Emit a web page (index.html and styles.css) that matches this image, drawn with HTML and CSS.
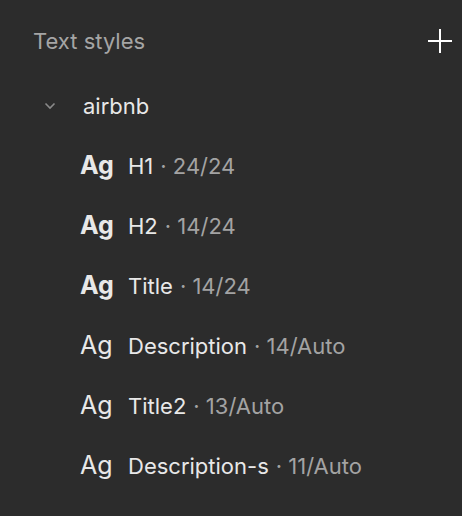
FILE: index.html
```html
<!DOCTYPE html>
<html>
<head>
	<title>Text styles</title>
	<meta charset="utf-8">
	<meta name="viewport" content="width=device-width, initial-scale=1">
	<link rel="stylesheet" href="styles.css">
</head>
<body>
	<div class="panel">
		<div class="header">
			<span class="title">Text styles</span>
			<button class="add" aria-label="Add style">
				<svg width="24" height="24" viewBox="0 0 24 24"><path d="M12 0v24M0 12h24" stroke="#fff" stroke-width="2"/></svg>
			</button>
		</div>
		<div class="group">
			<svg class="chevron" width="12" height="8" viewBox="0 0 12 8"><path d="M1.5 1.5l4.5 4.5 4.5-4.5" fill="none" stroke="#8a8a8a" stroke-width="1.6"/></svg>
			<span class="groupName">airbnb</span>
		</div>
		<ul class="styles">
			<li class="item"><span class="ag bold">Ag</span><span class="name">H1</span><span class="meta">· 24/24</span></li>
			<li class="item"><span class="ag bold">Ag</span><span class="name">H2</span><span class="meta">· 14/24</span></li>
			<li class="item"><span class="ag bold">Ag</span><span class="name">Title</span><span class="meta">· 14/24</span></li>
			<li class="item"><span class="ag">Ag</span><span class="name">Description</span><span class="meta">· 14/Auto</span></li>
			<li class="item"><span class="ag">Ag</span><span class="name">Title2</span><span class="meta">· 13/Auto</span></li>
			<li class="item"><span class="ag">Ag</span><span class="name">Description-s</span><span class="meta">· 11/Auto</span></li>
		</ul>
	</div>
</body>
</html>
```

FILE: styles.css
```css
html, body {
	margin: 0;
	background: #2c2c2c;
}
.panel {
	font-family: Inter, "Noto Sans", sans-serif;
	width: 462px;
	height: 516px;
	box-sizing: border-box;
	padding: 21px 10px 0 33px;
	color: #e8e8e8;
}
.header {
	display: flex;
	align-items: center;
	justify-content: space-between;
	height: 40px;
}
.title {
	font-size: 22px;
	color: #a5a5a5;
}
.add {
	background: none;
	border: 0;
	padding: 0;
	width: 24px;
	height: 24px;
	display: flex;
}
.group {
	display: flex;
	align-items: center;
	height: 50px;
	margin-top: 20px;
}
.chevron {
	margin-left: 11px;
	margin-right: 27px;
}
.groupName {
	font-size: 22px;
}
.styles {
	list-style: none;
	margin: 0;
	padding: 4px 0 0 47px;
}
.item {
	display: flex;
	align-items: baseline;
	height: 60px;
	line-height: 60px;
	font-size: 22px;
}
.ag {
	font-size: 25px;
	width: 48px;
}
.bold {
	font-weight: 700;
}
.name {
	margin-right: 7px;
}
.meta {
	color: #a3a3a3;
}
```
